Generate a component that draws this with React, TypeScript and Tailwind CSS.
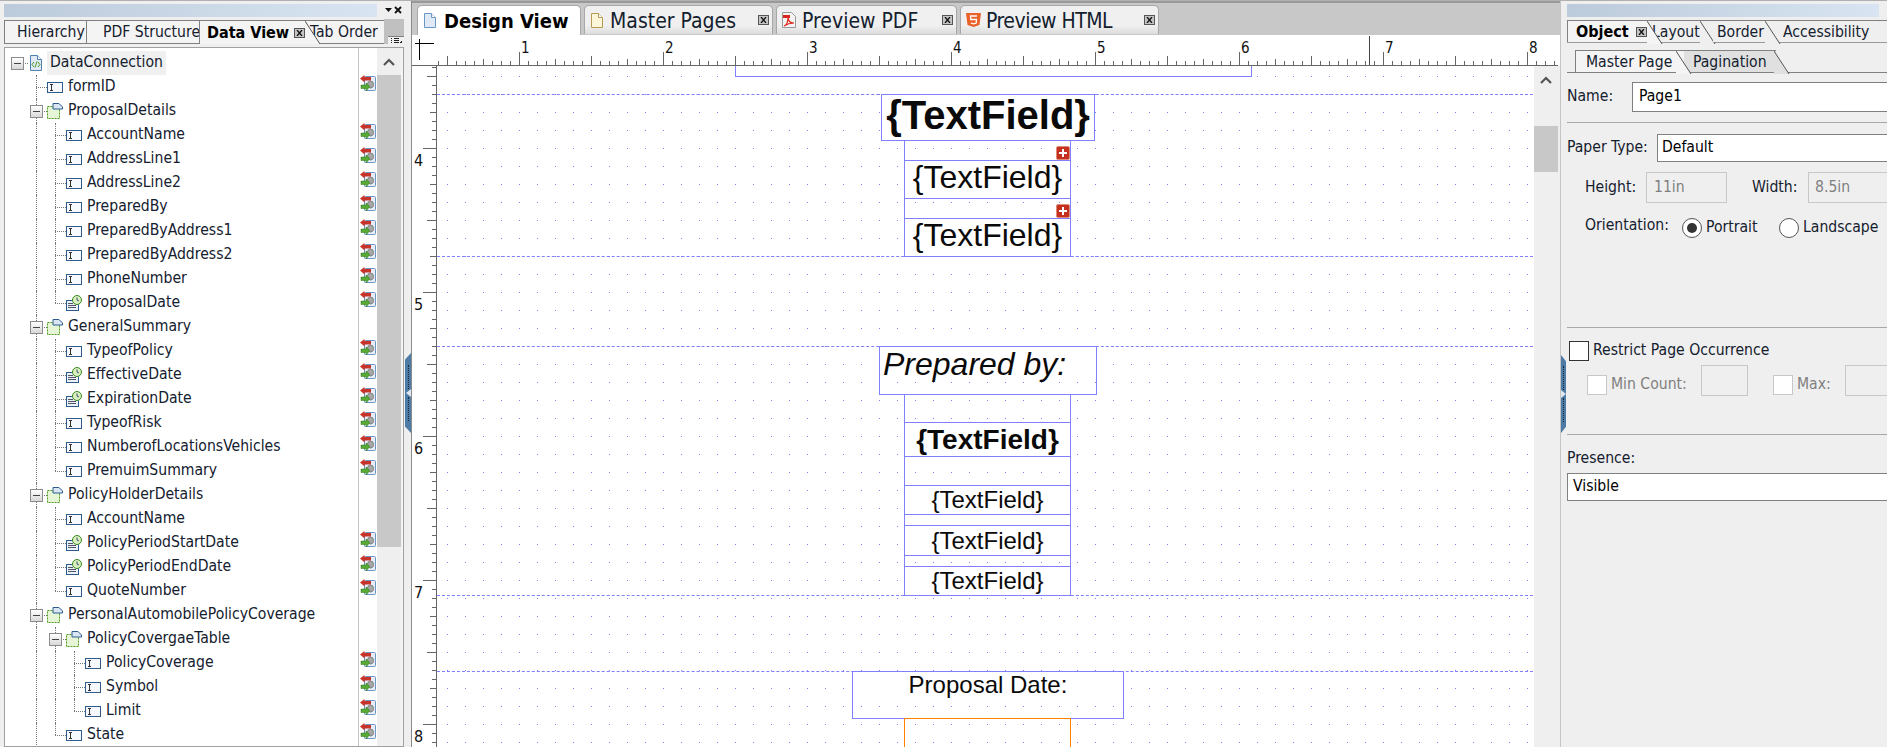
import type { ReactNode } from "react";

type Kind = "root" | "group" | "text" | "date";

type Row = { label: string; level: number; kind: Kind; bound?: boolean };

const rows: Row[] = [
  { label: "DataConnection", level: 0, kind: "root" },
  { label: "formID", level: 1, kind: "text", bound: true },
  { label: "ProposalDetails", level: 1, kind: "group" },
  { label: "AccountName", level: 2, kind: "text", bound: true },
  { label: "AddressLine1", level: 2, kind: "text", bound: true },
  { label: "AddressLine2", level: 2, kind: "text", bound: true },
  { label: "PreparedBy", level: 2, kind: "text", bound: true },
  { label: "PreparedByAddress1", level: 2, kind: "text", bound: true },
  { label: "PreparedByAddress2", level: 2, kind: "text", bound: true },
  { label: "PhoneNumber", level: 2, kind: "text", bound: true },
  { label: "ProposalDate", level: 2, kind: "date", bound: true },
  { label: "GeneralSummary", level: 1, kind: "group" },
  { label: "TypeofPolicy", level: 2, kind: "text", bound: true },
  { label: "EffectiveDate", level: 2, kind: "date", bound: true },
  { label: "ExpirationDate", level: 2, kind: "date", bound: true },
  { label: "TypeofRisk", level: 2, kind: "text", bound: true },
  { label: "NumberofLocationsVehicles", level: 2, kind: "text", bound: true },
  { label: "PremuimSummary", level: 2, kind: "text", bound: true },
  { label: "PolicyHolderDetails", level: 1, kind: "group" },
  { label: "AccountName", level: 2, kind: "text" },
  { label: "PolicyPeriodStartDate", level: 2, kind: "date", bound: true },
  { label: "PolicyPeriodEndDate", level: 2, kind: "date", bound: true },
  { label: "QuoteNumber", level: 2, kind: "text", bound: true },
  { label: "PersonalAutomobilePolicyCoverage", level: 1, kind: "group" },
  { label: "PolicyCovergaeTable", level: 2, kind: "group" },
  { label: "PolicyCoverage", level: 3, kind: "text", bound: true },
  { label: "Symbol", level: 3, kind: "text", bound: true },
  { label: "Limit", level: 3, kind: "text", bound: true },
  { label: "State", level: 2, kind: "text", bound: true },
  { label: "", level: 1, kind: "text" },
];

// is there another row under the same parent further down
function continues(from: number, level: number) {
  for (let i = from + 1; i < rows.length; i++) {
    if (rows[i].level < level) return false;
    if (rows[i].level === level) return true;
  }
  return false;
}

function TextIcon() {
  return (
    <svg width="16" height="11" viewBox="0 0 16 11" shapeRendering="crispEdges">
      <rect x="0.5" y="0.5" width="15" height="10" fill="#f6f8fb" stroke="#2d5c8c" />
      <path d="M3 2.5h3M3 8.5h3M4.5 2.5v6" stroke="#333" fill="none" />
    </svg>
  );
}

function GroupIcon() {
  return (
    <svg width="16" height="16" viewBox="0 0 16 16">
      <rect x="0.5" y="3.5" width="12" height="12" fill="#e6f5d5" stroke="#4c9a1e" strokeDasharray="2 1" />
      <path d="M6 .5h6l3.5 3.5v2H6z" fill="#d9e6f4" stroke="#2d5c8c" />
    </svg>
  );
}

function DateIcon() {
  return (
    <svg width="16" height="16" viewBox="0 0 16 16">
      <rect x="0.5" y="5.5" width="12" height="10" fill="#eaf1f8" stroke="#2d5c8c" />
      <path d="M2 8.5h5M2 10.5h8M2 12.5h8" stroke="#556" />
      <circle cx="11" cy="5" r="4.5" fill="#d8f0c0" stroke="#3d8a1e" />
      <path d="M11 2.5V5l2 1" stroke="#225" fill="none" strokeWidth="0.8" />
    </svg>
  );
}

function RootIcon() {
  return (
    <svg width="12" height="16" viewBox="0 0 12 16">
      <path d="M.5.5h7l4 4v11H.5z" fill="#dfeaf6" stroke="#4f81b5" />
      <path d="M7.5.5v4h4" fill="#fff" stroke="#4f81b5" />
      <path d="M4 7 2 9.5 4 12M8 7l2 2.500L8 12" stroke="#4c9a1e" fill="none" />
      <path d="M7 6.500 5 12.500" stroke="#4c9a1e" />
    </svg>
  );
}

function BindIcon() {
  return (
    <svg width="16" height="16" viewBox="0 0 16 16">
      <rect x="4.500" y="1.500" width="11" height="14" rx="1" fill="#e6eef7" stroke="#6c97c4" />
      <ellipse cx="10.500" cy="9.500" rx="3" ry="3.500" fill="#a8a8a8" stroke="#808080" />
      <path d="M0 3.500 4.500 0v2H11v3.500H4.500v2z" fill="#c8342a" />
      <path d="M10 11.500 6 8v2H1v3.500h5V16z" fill="#5aa838" stroke="#2f7a18" strokeWidth="0.5" />
    </svg>
  );
}

function CloseIcon() {
  return (
    <span className="flex h-[10px] w-[11px] items-center justify-center border border-[#555] bg-[#c4c4c4]">
      <svg width="7" height="6" viewBox="0 0 7 6">
        <path d="M1 0l5 6M6 0 1 6" stroke="#111" strokeWidth="1.300" />
      </svg>
    </span>
  );
}

function ExpandBox() {
  return (
    <span className="absolute -left-[6px] top-[6px] z-10 flex h-[13px] w-[13px] items-center justify-center border border-[#8c8c8c] bg-gradient-to-b from-white to-[#d8d8d8]">
      <span className="h-px w-[7px] bg-[#444]" />
    </span>
  );
}

function TreeRow({ row, index }: { row: Row; index: number }) {
  const guides = [];
  for (let k = 1; k < row.level; k++) {
    guides.push(
      <span
        key={k}
        className={
          continues(index, k)
            ? "h-full w-[19px] shrink-0 border-l border-dotted border-[#777]"
            : "h-full w-[19px] shrink-0"
        }
      />
    );
  }
  const hasNext = continues(index, row.level);
  const isGroup = row.kind === "group" || row.kind === "root";
  return (
    <div className="flex h-[24px] items-center pl-[12px]">
      {row.level > 0 && <span className="w-[19px] shrink-0" />}
      {guides}
      <span className="relative h-full w-[11px] shrink-0">
        {row.level > 0 && (
          <span
            className={
              hasNext
                ? "absolute left-0 top-0 h-full border-l border-dotted border-[#777]"
                : "absolute left-0 top-0 h-1/2 border-l border-dotted border-[#777]"
            }
          />
        )}
        <span className="absolute left-0 top-1/2 w-full border-t border-dotted border-[#777]" />
        {isGroup && <ExpandBox />}
      </span>
      {row.label && (
        <>
          <span className="flex w-[16px] shrink-0 justify-center">
            {row.kind === "text" && <TextIcon />}
            {row.kind === "group" && <GroupIcon />}
            {row.kind === "date" && <DateIcon />}
            {row.kind === "root" && <RootIcon />}
          </span>
          <span
            className={
              row.kind === "root"
                ? "ml-[3px] flex h-[24px] items-center bg-[#f0f0f0] px-[3px] text-[15.6px] text-[#14202e]"
                : "ml-[5px] whitespace-nowrap text-[15.6px] text-[#14202e]"
            }
          >
            {row.label}
          </span>
        </>
      )}
      {row.bound && (
        <span className="ml-auto mr-px -translate-y-[4px]">
          <BindIcon />
        </span>
      )}
    </div>
  );
}

function ScrollBar({ spacer, thumb }: { spacer: string; thumb: string }) {
  return (
    <div className="w-[24px] shrink-0 bg-[#efefef]">
      <div className={`${spacer} flex justify-center pt-[10px]`}>
        <svg width="12" height="8" viewBox="0 0 12 8">
          <path d="M1 7l5-5 5 5" stroke="#555" strokeWidth="2.200" fill="none" />
        </svg>
      </div>
      <div className={`${thumb} bg-[#c8c8c8]`} />
    </div>
  );
}

// slanted tab edge: the tab on its left runs over the tab on its right
function Slant({ className, fill = "#f4f4f4" }: { className: string; fill?: string }) {
  return (
    <svg className={`absolute top-0 ${className}`} width="16" height="24" viewBox="0 0 16 24">
      <path d="M0 0 15 23H0z" fill={fill} />
      <path d="M0 0 15 23" stroke="#555" fill="none" />
    </svg>
  );
}

function PanelBar({ width }: { width: string }) {
  return <div className={`${width} h-[13px] bg-gradient-to-r from-[#bccbdb] to-[#d8e4f1]`} />;
}

function LeftPanel() {
  return (
    <div className="flex h-full w-[404px] shrink-0 flex-col pl-[4px] pt-[3px]">
      <div className="flex items-center">
        <PanelBar width="w-[373px]" />
        <svg className="ml-[8px]" width="17" height="9" viewBox="0 0 17 9">
          <path d="M0 2h7L3.500 6z" fill="#111" />
          <path d="M10 1l6 6M16 1l-6 6" stroke="#111" strokeWidth="1.800" />
        </svg>
      </div>
      <div className="relative mt-[2px] flex h-[25px] items-stretch text-[15.6px] leading-[22px] text-[#14202e]">
        <div className="h-[24px] w-[83px] self-end border border-[#808080] bg-[#f4f4f4] pl-[12px]">Hierarchy</div>
        <div className="h-[24px] w-[112px] self-end overflow-hidden whitespace-nowrap border-y border-[#808080] bg-[#f4f4f4] pl-[16px]">
          PDF Structure
        </div>
        <div className="relative flex h-[24px] w-[108px] items-center self-end border-l border-t border-[#808080] bg-[#f4f4f4] pl-[7px] text-[16px] font-bold text-black">
          <span className="whitespace-nowrap">Data View</span>
          <span className="ml-[5px]">
            <CloseIcon />
          </span>
        </div>
        <div className="relative h-[24px] w-[77px] self-end whitespace-nowrap border-y border-[#808080] bg-[#f4f4f4] pl-[3px]">
          Tab Order
          <Slant className="-left-[2px] -top-px" />
        </div>
        <div className="relative h-[25px] flex-1 bg-[#c0c0c0]">
          <div className="absolute bottom-0 right-0 flex h-[8px] w-[16px] items-center justify-center border-t border-[#808080] bg-[#f0f0f0]">
            <svg width="11" height="6" viewBox="0 0 11 6" shapeRendering="crispEdges">
              <path d="M0 .5h1M3 .5h5M0 2.500h1M3 2.500h5M0 4.500h1M3 4.500h5" stroke="#222" />
              <path d="M8 5h3V2z" fill="#222" />
            </svg>
          </div>
        </div>
      </div>
      <div className="mt-[3px] flex min-h-0 flex-1 border border-[#a0a0a0] bg-white">
        <div className="relative min-w-0 flex-1 overflow-hidden pt-[3px]">
          <div className="absolute bottom-0 right-[18px] top-0 w-px bg-[#c4c4c4]" />
          {rows.map((row, i) => (
            <TreeRow key={i} row={row} index={i} />
          ))}
        </div>
        <ScrollBar spacer="h-[27px]" thumb="h-[472px]" />
        <div className="w-[2px] shrink-0 bg-[#f4f4f4]" />
      </div>
    </div>
  );
}

function Splitter({ side }: { side: "left" | "right" }) {
  const isLeft = side === "left";
  return (
    <div
      className={
        isLeft
          ? "flex h-full w-[8px] shrink-0 items-start border-r border-[#8a8a8a]"
          : "flex h-full w-[7px] shrink-0 items-start border-l border-[#c4c4c4]"
      }
    >
      <div
        className={
          isLeft
            ? "ml-px mt-[352px] flex h-[80px] w-[6px] flex-col items-center justify-center bg-[#4d7ba5] [clip-path:polygon(100%_0,100%_100%,0_92%,0_8%)]"
            : "mt-[354px] flex h-[78px] w-[5px] flex-col items-center justify-center bg-[#4d7ba5] [clip-path:polygon(0_0,100%_8%,100%_92%,0_100%)]"
        }
      >
        <div className="h-[24px] w-px border-l border-dotted border-[#16283a]" />
        <svg width="5" height="8" viewBox="0 0 5 8">
          <path d={isLeft ? "M5 0v8L0 4z" : "M0 0v8l5-4z"} fill="#dfe6ee" />
        </svg>
        <div className="h-[24px] w-px border-l border-dotted border-[#16283a]" />
      </div>
    </div>
  );
}

function DocIcon({ tint, stroke }: { tint: string; stroke: string }) {
  return (
    <svg width="12" height="15" viewBox="0 0 12 15">
      <path d="M.5.5h7l4 4v10H.5z" fill={tint} stroke={stroke} />
      <path d="M7.500.5v4h4" fill="#fff" stroke={stroke} />
    </svg>
  );
}

function PdfIcon() {
  return (
    <svg width="14" height="16" viewBox="0 0 14 16">
      <path d="M.5.5h9l4 4v11H.5z" fill="#f4f4f4" stroke="#999" />
      <path d="M1 3h7v3H1z" fill="#d8281e" />
      <path d="M2 14c3-1 4-5 4-9 0 4 2 6 6 6-3 0-7 1-10 3z" fill="none" stroke="#e0281e" strokeWidth="1.200" />
    </svg>
  );
}

function HtmlIcon() {
  return (
    <svg width="15" height="14" viewBox="0 0 15 14">
      <path d="M0 0h15l-1.500 12-6 2-6-2z" fill="#e9622a" />
      <path d="M11 3H4.500l.3 3.500h5.700l-.3 3.500-2.700.9-2.700-.9" fill="none" stroke="#fff" strokeWidth="1.300" />
    </svg>
  );
}

function DocTab({
  width,
  icon,
  label,
  textOffset,
  active,
}: {
  width: string;
  icon: ReactNode;
  label: string;
  textOffset: string;
  active?: boolean;
}) {
  return (
    <div
      className={
        active
          ? `${width} relative flex h-[30px] shrink-0 items-center rounded-t-[5px] border-x border-t border-[#a8a8a8] bg-white pl-[6px]`
          : `${width} relative mb-px flex h-[29px] shrink-0 items-center rounded-t-[5px] border-x border-t border-[#a8a8a8] bg-gradient-to-b from-[#f0f0f0] from-70% to-[#dcdcdc] pl-[4px]`
      }
    >
      <span className={`flex ${active ? "w-[12px]" : "w-[16px]"} shrink-0 justify-center`}>{icon}</span>
      <span className={`${textOffset} whitespace-nowrap ${active ? "text-[20px] font-bold text-black" : "translate-y-[2px] text-[21px] text-[#14202e]"}`}>{label}</span>
      {!active && (
        <span className="ml-auto mr-[3px]">
          <CloseIcon />
        </span>
      )}
    </div>
  );
}

function HRuler() {
  const ticks = [];
  for (let x = 438; x < 1558; x += 9) {
    const n = (((x - 519) / 9) % 16 + 16) % 16;
    const len = n === 0 ? 13 : n === 8 ? 9 : n === 4 || n === 12 ? 6 : 4;
    ticks.push(`M${x - 412} ${30 - len}v${len}`);
  }
  return (
    <svg width="1148" height="31" viewBox="0 0 1148 31" shapeRendering="crispEdges" className="block bg-white">
      <path d="M0 30.500h1146" stroke="#666" />
      <path d="M3 8.500h19M7.500 4v21" stroke="#000" />
      <path d={ticks.join("")} stroke="#666" transform="translate(.5 0)" />
      <path d="M957.500 1v29" stroke="#444" />
      {[1, 2, 3, 4, 5, 6, 7, 8].map((n) => (
        <text key={n} x={519 + (n - 1) * 144 - 412 + 2} y="18" fontSize="15" fill="#111" shapeRendering="auto">
          {n}
        </text>
      ))}
    </svg>
  );
}

function VRuler() {
  const ticks = [];
  for (let y = 67; y < 747; y += 9) {
    const n = (((y - 148) / 9) % 16 + 16) % 16;
    const len = n === 0 ? 13 : n === 8 ? 9 : n === 4 || n === 12 ? 6 : 4;
    ticks.push(`M${24 - len} ${y - 66}h${len}`);
  }
  return (
    <svg width="25" height="681" viewBox="0 0 25 681" shapeRendering="crispEdges" className="block shrink-0 bg-white">
      <path d="M24.500 0v681" stroke="#666" />
      <path d={ticks.join("")} stroke="#666" transform="translate(0 .5)" />
      {[4, 5, 6, 7, 8].map((n) => (
        <text key={n} x="2" y={100 + (n - 4) * 144} fontSize="16" fill="#111" shapeRendering="auto">
          {n}
        </text>
      ))}
    </svg>
  );
}

function PlusBadge() {
  return (
    <span className="absolute bottom-0 right-0 flex h-[14px] w-[14px] items-center justify-center rounded-[2px] border border-[#e08a78] bg-[#c4321f]">
      <svg width="8" height="8" viewBox="0 0 8 8" shapeRendering="crispEdges">
        <path d="M3 0h2v3h3v2H5v3H3V5H0V3h3z" fill="#fff" />
      </svg>
    </span>
  );
}

function Field({ height, className, bold }: { height: string; className: string; bold?: boolean }) {
  return (
    <div className={`${height} ${className} ${bold ? "font-bold" : ""} flex items-center justify-center whitespace-nowrap border-b border-[#8080ff] bg-white leading-none text-[#0a0a0a]`}>
      {"{TextField}"}
    </div>
  );
}

function GapRow({ height, badge }: { height: string; badge?: boolean }) {
  return <div className={`${height} relative border-b border-[#8080ff]`}>{badge && <PlusBadge />}</div>;
}

function Canvas() {
  return (
    <div className="relative min-w-0 flex-1 overflow-hidden bg-white font-['Liberation_Sans',sans-serif] font-stretch-normal">
      <svg className="absolute left-0 top-0" width="1091" height="681" shapeRendering="crispEdges">
        <defs>
          <pattern id="grid-dots" width="18" height="18" patternUnits="userSpaceOnUse">
            <rect x="10" y="10" width="1" height="1" fill="#8080ff" />
          </pattern>
        </defs>
        <rect width="1091" height="681" fill="url(#grid-dots)" />
      </svg>

      <div className="absolute left-0 top-[28px] w-[1096px] border-t border-dashed border-[#8080ff]" />
      <div className="absolute left-0 top-[190px] w-[1096px] border-t border-dashed border-[#8080ff]" />
      <div className="absolute left-0 top-[280px] w-[1096px] border-t border-dashed border-[#8080ff]" />
      <div className="absolute left-0 top-[529px] w-[1096px] border-t border-dashed border-[#8080ff]" />
      <div className="absolute left-0 top-[605px] w-[1096px] border-t border-dashed border-[#8080ff]" />

      <div className="absolute left-[298px] top-0 h-[11px] w-[517px] border-x border-b border-[#8080ff] bg-white" />

      <div className="absolute left-[444px] top-[28px] flex h-[47px] w-[214px] items-center justify-center border border-[#8080ff] bg-white pb-[6px] text-[40px] font-bold leading-none text-[#0a0a0a]">
        {"{TextField}"}
      </div>

      <div className="absolute left-[467px] top-[74px] w-[167px] border-x border-[#8080ff]">
        <GapRow height="h-[21px]" badge />
        <Field height="h-[38px]" className="pb-[5px] text-[32px]" />
        <GapRow height="h-[20px]" badge />
        <Field height="h-[38px]" className="pb-[5px] text-[32px]" />
      </div>

      <div className="absolute left-[442px] top-[280px] h-[49px] w-[218px] border border-[#8080ff]">
        <div className="h-[34px] bg-white pl-[3px] text-[32px] italic leading-[34px] text-[#0a0a0a]">Prepared by:</div>
      </div>

      <div className="absolute left-[467px] top-[328px] w-[167px] border-x border-[#8080ff]">
        <GapRow height="h-[29px]" />
        <Field height="h-[34px]" className="text-[28px]" bold />
        <GapRow height="h-[29px]" />
        <Field height="h-[29px]" className="text-[24px]" />
        <GapRow height="h-[11px]" />
        <Field height="h-[30px]" className="text-[24px]" />
        <GapRow height="h-[11px]" />
        <Field height="h-[29px]" className="text-[24px]" />
      </div>

      <div className="absolute left-[415px] top-[605px] h-[48px] w-[272px] border border-[#8080ff]">
        <div className="h-[25px] bg-white text-center text-[24px] leading-[25px] text-[#0a0a0a]">Proposal Date:</div>
      </div>
      <div className="absolute left-[467px] top-[652px] h-[40px] w-[167px] border-x border-t border-[#ff8000]" />
    </div>
  );
}

function MiddlePanel() {
  return (
    <div className="flex h-full w-[1148px] shrink-0 flex-col">
      <div className="flex h-[34px] shrink-0 items-end gap-[3px] border-t-[2px] border-t-[#9a9a9a] bg-[#c8c8c8] pl-[5px]">
        <DocTab width="w-[164px]" active icon={<DocIcon tint="#dfeaf6" stroke="#6c97c4" />} label="Design View" textOffset="ml-[8px]" />
        <DocTab width="w-[189px]" icon={<DocIcon tint="#fdf6d8" stroke="#b89a50" />} label="Master Pages" textOffset="ml-[5px]" />
        <DocTab width="w-[181px]" icon={<PdfIcon />} label="Preview PDF" textOffset="ml-[5px]" />
        <DocTab width="w-[199px]" icon={<HtmlIcon />} label="Preview HTML" textOffset="ml-[5px] tracking-[-0.5px]" />
      </div>
      <HRuler />
      <div className="flex min-h-0 flex-1">
        <VRuler />
        <Canvas />
        <ScrollBar spacer="h-[60px]" thumb="h-[46px]" />
        <div className="w-[2px] shrink-0 bg-[#efefef]" />
      </div>
    </div>
  );
}

function RightPanel() {
  const disabledBox = "border border-[#c8c8c8] bg-[#efefef]";
  return (
    <div className="flex h-full min-w-0 flex-1 flex-col overflow-hidden pt-[3px] text-[15.6px] text-[#14202e]">
      <PanelBar width="w-[312px]" />
      <div className="relative mt-[3px] flex h-[23px] w-[320px] border-b border-[#9a9a9a] leading-[23px]">
        <div className="relative flex w-[81px] items-center border-l border-t border-[#808080] bg-[#f4f4f4] pl-[8px] text-[16px] font-bold text-black">
          Object
          <span className="ml-[7px]">
            <CloseIcon />
          </span>
        </div>
        <div className="relative w-[65px] border-t border-[#808080] bg-[#efefef] pl-[4px]">
          Layout
          <Slant className="-left-[1px] -top-px" />
          <Slant className="left-[52px] -top-px" fill="#efefef" />
        </div>
        <div className="relative w-[65px] border-t border-[#808080] bg-[#efefef] pl-[4px]">
          Border
          <Slant className="left-[52px] -top-px" fill="#efefef" />
        </div>
        <div className="flex-1 whitespace-nowrap border-t border-[#808080] bg-[#efefef] pl-[5px]">Accessibility</div>
      </div>
      <div className="relative mt-[7px] flex h-[23px] w-[320px] border-b border-[#808080] leading-[23px]">
        <div className="w-[8px]" />
        <div className="relative w-[109px] border-l border-t border-[#808080] bg-[#f4f4f4] pl-[10px]">
          Master Page
        </div>
        <div className="relative w-[92px] border-t border-[#808080] bg-[#e0e0e0] pl-[9px]">
          Pagination
          <Slant className="-left-[8px] -top-px" />
          <Slant className="-right-[14px] -top-px" fill="#e0e0e0" />
        </div>
      </div>
      <div className="mt-[9px] flex h-[30px] items-center">
        <span className="w-[65px]">Name:</span>
        <div className="h-full flex-1 border-y border-l border-[#808080] bg-white pl-[6px] leading-[26px] text-black">Page1</div>
      </div>
      <div className="mt-[10px] h-px bg-[#a8a8a8]" />
      <div className="mt-[11px] flex h-[28px] items-center">
        <span className="w-[90px] whitespace-nowrap">Paper Type:</span>
        <div className="flex h-full flex-1 items-center border-y border-l border-[#808080] bg-white pl-[4px] text-black">Default</div>
      </div>
      <div className="mt-[10px] flex h-[31px] items-center pl-[18px]">
        <span className="w-[61px]">Height:</span>
        <div className={`${disabledBox} flex h-full w-[81px] items-center pl-[7px] text-[#7f7f7f]`}>11in</div>
        <span className="ml-[25px] w-[56px]">Width:</span>
        <div className={`${disabledBox} flex h-full flex-1 items-center border-r-0 pl-[6px] text-[#7f7f7f]`}>8.5in</div>
      </div>
      <div className="mt-[15px] flex h-[20px] items-center pl-[18px]">
        <span className="w-[97px] -translate-y-[2px]">Orientation:</span>
        <span className="flex h-[20px] w-[20px] items-center justify-center rounded-full border border-[#555] bg-white">
          <span className="h-[10px] w-[10px] rounded-full bg-[#333]" />
        </span>
        <span className="ml-[4px] w-[73px]">Portrait</span>
        <span className="h-[20px] w-[20px] rounded-full border border-[#555] bg-white" />
        <span className="ml-[4px]">Landscape</span>
      </div>
      <div className="mt-[89px] h-px bg-[#a8a8a8]" />
      <div className="mt-[13px] flex h-[20px] items-center pl-[2px]">
        <span className="h-[20px] w-[20px] border border-[#333] bg-white" />
        <span className="ml-[4px]">Restrict Page Occurrence</span>
      </div>
      <div className="mt-[4px] flex h-[31px] items-center pl-[20px] text-[#7f7f7f]">
        <span className="h-[20px] w-[20px] translate-y-[4px] border border-[#c8c8c8] bg-white" />
        <span className="ml-[4px] w-[90px] translate-y-[4px] whitespace-nowrap">Min Count:</span>
        <span className={`${disabledBox} h-[31px] w-[47px]`} />
        <span className="ml-[25px] h-[20px] w-[20px] translate-y-[4px] border border-[#c8c8c8] bg-white" />
        <span className="ml-[4px] w-[48px] translate-y-[4px]">Max:</span>
        <span className={`${disabledBox} h-[31px] flex-1 border-r-0`} />
      </div>
      <div className="mt-[38px] h-px bg-[#a8a8a8]" />
      <div className="mt-[14px] flex h-[20px] items-center">Presence:</div>
      <div className="mt-[4px] flex h-[28px] items-center border-y border-l border-[#808080] bg-white pl-[5px] text-black">Visible</div>
    </div>
  );
}

export default function App() {
  return (
    <div className="flex h-[747px] w-[1887px] overflow-hidden border-t border-[#b0b0b0] bg-[#efefef] font-['DejaVu_Sans',sans-serif] font-stretch-condensed">
      <LeftPanel />
      <Splitter side="left" />
      <MiddlePanel />
      <Splitter side="right" />
      <RightPanel />
    </div>
  );
}
